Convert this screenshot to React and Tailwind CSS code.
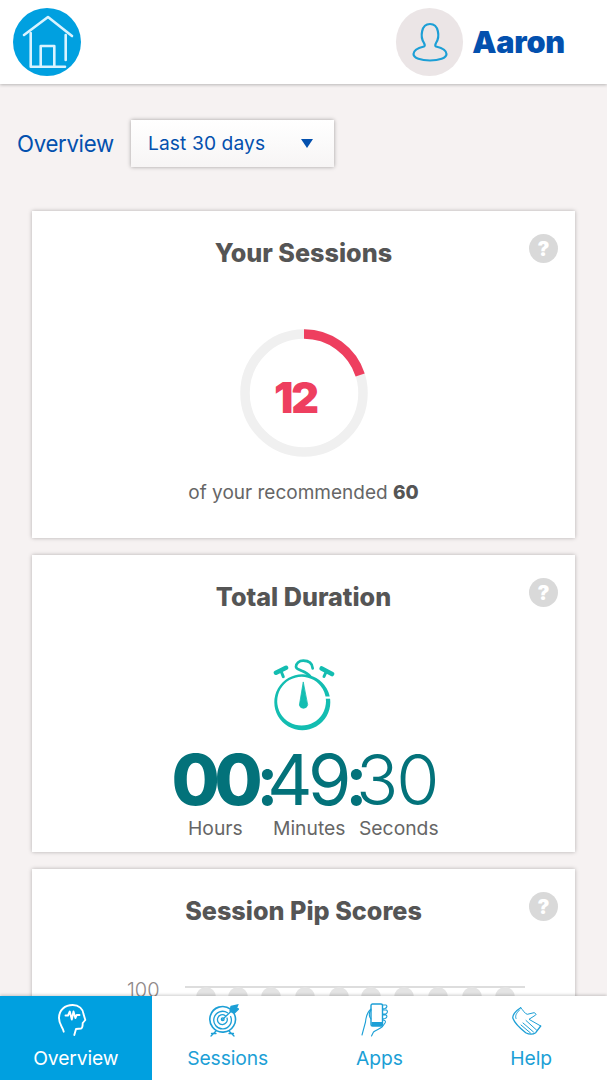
import React from "react";

const sans = "font-['Inter','Liberation_Sans',sans-serif]";

function HomeLogo() {
  return (
    <svg width="68" height="68" viewBox="0 0 68 68" fill="none">
      <circle cx="34" cy="34" r="34" fill="#00a0e0" />
      <g stroke="#d9f3ff" strokeWidth="2.6" strokeLinecap="round" strokeLinejoin="round">
        <path d="M11 27 L35 9 L59 28" />
        <path d="M17.7 25 V58.7 H52" />
        <path d="M52.7 27 V52" />
        <path d="M27.7 58.7 V38 H41.3 V58.7" />
      </g>
    </svg>
  );
}

function UserIcon() {
  return (
    <svg width="36" height="40" viewBox="0 0 36 40" fill="none" stroke="#1c9fd6" strokeWidth="2.2">
      <path d="M12 21 C8 15 9 2 18 2 C27 2 28 15 24 21 C23 23 23 24 24 24.5 C30 26 34.5 29 34.5 32 C34.5 36 27 38.5 18 38.5 C9 38.5 1.5 36 1.5 32 C1.5 29 6 26 12 24.5 C13 24 13 23 12 21 Z" />
    </svg>
  );
}

function HelpBadge() {
  return (
    <div className="absolute right-[17px] top-[23px] flex h-[29px] w-[29px] items-center justify-center rounded-full bg-[#d9d9d9] text-[20px] font-black leading-none text-white">
      ?
    </div>
  );
}

function Ring() {
  const r = 59;
  const c = 2 * Math.PI * r;
  return (
    <svg width="128" height="128" viewBox="0 0 128 128" className="absolute inset-0" fill="none">
      <circle cx="64" cy="64" r={r} stroke="#f0f0f0" strokeWidth="9.5" />
      <circle
        cx="64"
        cy="64"
        r={r}
        stroke="#ee3f5f"
        strokeWidth="9.5"
        strokeDasharray={`${c * 0.2} ${c}`}
        transform="rotate(-90 64 64)"
      />
    </svg>
  );
}

function Stopwatch() {
  return (
    <svg width="62" height="74" viewBox="0 0 62 74" fill="none" stroke="#13bdb1" strokeLinecap="round">
      {/* crescent body: inner circle sits up-left so the stroke thickens toward the bottom */}
      <path
        fillRule="evenodd"
        fill="#13bdb1"
        stroke="none"
        d="M29.3 15.3 a28 28 0 1 0 0.01 0 Z M28.6 17.8 a24.4 24.4 0 1 1 -0.01 0 Z"
      />
      <rect x="50" y="37.5" width="10" height="2.2" fill="#fff" stroke="none" />
      <path d="M39.7 9.3 C39 3 34 1.7 30.3 1.7 C26 1.7 23 4.5 23 7.7 C23 10 26 10.5 28.7 11.7 C32 13 35 14.5 37 17" strokeWidth="2.7" />
      <path d="M30.2 23.3 L26.4 46 A4.2 4.2 0 0 0 34.6 46 Z" fill="#13bdb1" stroke="#13bdb1" strokeWidth="0.8" strokeLinejoin="round" />
      <path d="M3 13.7 L13 8.8" strokeWidth="4.6" />
      <path d="M8 12 L10.3 17.7" strokeWidth="3" />
      <path d="M48.7 9.5 L59 15" strokeWidth="4.6" />
      <path d="M53.5 12 L51 17.5" strokeWidth="3" />
    </svg>
  );
}

function BrainIcon() {
  return (
    <svg width="30" height="32" viewBox="0 0 30 32" fill="none" stroke="#fff" strokeWidth="1.9" strokeLinecap="round" strokeLinejoin="round">
      <path d="M5.7 27.7 C5 23 1 21 1 14 C1 6 7 1 14.7 1 C21 1 25 5 25.5 10 L27.3 16 L24.7 19 C24.7 22 24.5 24 23 24.5 L18 25 L16.3 31" />
      <path d="M7.5 11.5 H10 L11.8 7.5 L13.8 15.5 L15.5 7.5 L17.4 14 L18.7 11 H21.5" />
    </svg>
  );
}

function TargetIcon() {
  return (
    <svg width="31" height="33" viewBox="0 0 31 33" fill="none" stroke="#1c9fd6" strokeWidth="1.3" strokeLinecap="round">
      <path d="M22.5 5.2 A12.8 12.8 0 1 0 26.3 10" strokeWidth="1.6" />
      <path d="M19.5 8.8 A8.8 8.8 0 1 0 22.6 12.5" />
      <path d="M17.3 11.7 A4.9 4.9 0 1 0 19 14" />
      <circle cx="14.7" cy="15.3" r="1.4" />
      <path d="M14.7 15.3 L25 5.5" />
      <path d="M23 2.5 L29.7 1 L28.5 4 L30.5 5 L26 9.5 L22 7 Z" fill="#1c9fd6" />
      <path d="M8 27 L3 32 M21 27 L26 32 M3.5 29.5 H8 M21 29.5 H25.5" />
    </svg>
  );
}

function PhoneIcon() {
  return (
    <svg width="28" height="34" viewBox="0 0 28 34" fill="none" stroke="#1c9fd6" strokeWidth="1.1" strokeLinecap="round" strokeLinejoin="round">
      <rect x="10" y="1" width="11.5" height="22" rx="1.5" strokeWidth="1.4" />
      <rect x="10.5" y="19" width="10.5" height="4" fill="#1c9fd6" stroke="none" />
      <path d="M10 6 C6 9 5 14 4.5 19 L1 32" />
      <path d="M10 7 C8 9 7.5 13 10 16" />
      <path d="M21.5 2 H25 C26.5 2.5 26 5 24 5.5 L21.5 6 M21.5 7 H25.5 C27 8 26.5 10.5 24.5 11 L21.5 11 M21.5 12 H25 C26.5 13 26 15 24 15.5 L21.5 16 M21.5 17 C24 17 25 18 24 20 L21.5 23.5 C19 26 15 27 12.5 29 L10.5 33" />
    </svg>
  );
}

function HandIcon() {
  return (
    <svg width="30" height="29" viewBox="0 0 30 29" fill="none" stroke="#1c9fd6" strokeWidth="1" strokeLinecap="round" strokeLinejoin="round">
      <path d="M8.7 1.7 C3 5 0 10 1 12.5 C3 18 9 23 13.7 26.7 C17 28.5 21 28.5 23.7 26.7 L28.7 20" strokeWidth="1.3" />
      <path d="M7.5 4 C4 7.5 3 10 4 12.5 M8.7 1.7 C11 4 13 8 15.3 8.3 L22 6.7 C23.5 7 24.5 8.5 23.7 9 L17 13.3 L28.7 20" />
      <path d="M24.5 24 L14 14.5 M21.5 26 L11 17 M18.5 27 L9 19" />
    </svg>
  );
}

function Tab({ icon, label, active, iconClass }) {
  return (
    <div className={`relative flex h-full flex-col items-center pt-[7px] ${active ? "bg-[#00a0e0] text-white" : "bg-white text-[#1c9fd6]"}`}>
      <div className={`flex h-[34px] items-center justify-center ${iconClass}`}>{icon}</div>
      <div className="absolute top-[50px] text-[19.3px] leading-[24px] tracking-[-0.1px]">{label}</div>
    </div>
  );
}

function Card({ title, height, children }) {
  return (
    <section className="relative w-full overflow-hidden bg-white shadow-[0_0_4px_rgba(0,0,0,0.28)]" style={{ height }}>
      <HelpBadge />
      <h2 className="pt-[26px] text-center text-[25.2px] font-extrabold leading-[32px] text-[#555555]">{title}</h2>
      {children}
    </section>
  );
}

export default function App() {
  const dots = [206, 238, 271, 305, 339, 371, 404, 438, 472, 505];
  return (
    <div className={`relative h-[1080px] w-[607px] overflow-hidden bg-[#f6f2f2] ${sans}`}>
      <header className="flex h-[84px] items-center justify-between bg-white pl-[13px] pr-[42px] shadow-[0_1px_3px_rgba(0,0,0,0.25)]">
        <HomeLogo />
        <div className="flex items-center gap-[9px]">
          <div className="flex h-[68px] w-[67px] items-center justify-center rounded-full bg-[#ebe5e6] pl-[1px]">
            <UserIcon />
          </div>
          <span className="pt-[1px] text-[30.6px] font-black leading-none tracking-[-0.2px] text-[#0350ae]">Aaron</span>
        </div>
      </header>

      <div className="flex items-center pl-[17px] pt-[36px]">
        <span className="w-[114px] text-[22.2px] leading-[47px] tracking-[-0.3px] text-[#0350ae]">Overview</span>
        <div className="flex h-[47px] w-[203px] items-center justify-between bg-gradient-to-b from-white to-[#f7f5f5] pl-[17px] pr-[21px] shadow-[0_0_4px_rgba(0,0,0,0.35)]">
          <span className="text-[19.2px] tracking-[0.1px] text-[#0350ae]">Last 30 days</span>
          <span className="h-0 w-0 border-x-[6.5px] border-t-[9px] border-x-transparent border-t-[#0350ae]" />
        </div>
      </div>

      <main className="flex flex-col gap-[17px] pl-[32px] pr-[32px] pt-[44px]">
        <Card title="Your Sessions" height={327}>
          <div className="relative mx-auto mt-[60px] h-[128px] w-[128px]">
            <Ring />
            <div className="absolute inset-0 flex items-center justify-center pt-[9px] pr-[16px] text-[43px] font-black leading-none tracking-[-2px] text-[#ee3f5f]">
              12
            </div>
          </div>
          <p className="mt-[22px] text-center text-[19px] leading-[28px] text-[#666666]">
            of your recommended <b className="font-extrabold text-[#555555]">60</b>
          </p>
        </Card>

        <Card title="Total Duration" height={297}>
          <div className="ml-[241px] mt-[46px] flex h-[74px] w-[62px]">
            <Stopwatch />
          </div>
          <div className="mb-[7px] mt-[18px] flex justify-center pl-[2px] text-[70px] leading-[58px] text-[#03727a]">
            <span className="font-extrabold tracking-[-5.5px]">00</span>
            <span className="flex w-[10px] translate-x-[5px] justify-center font-semibold">:</span>
            <span className="font-normal tracking-[-4.5px]">49</span>
            <span className="flex w-[9px] translate-x-[5px] justify-center font-semibold">:</span>
            <span className="font-light tracking-[-2px]">30</span>
          </div>
          <div className="flex pl-[156px] text-[19.3px] leading-[24px] text-[#666666]">
            <span className="w-[85px]">Hours</span>
            <span className="w-[86px]">Minutes</span>
            <span>Seconds</span>
          </div>
        </Card>

        <Card title="Session Pip Scores" height={300}>
          <div className="relative">
            <span className="absolute left-[95px] top-[51px] text-[20px] font-light leading-[24px] text-[#8f8888]">100</span>
            <div className="absolute left-[153px] top-[59px] h-[2px] w-[340px] bg-[#dddddd]" />
            {dots.map((x) => (
              <span
                key={x}
                className="absolute top-[60px] h-[20px] w-[20px] rounded-full bg-[#e4e4e4]"
                style={{ left: x - 32 - 10 }}
              />
            ))}
          </div>
        </Card>
      </main>

      <nav className="absolute inset-x-0 bottom-0 grid h-[84px] grid-cols-4 bg-white shadow-[0_-1px_3px_rgba(0,0,0,0.2)]">
        <Tab active icon={<BrainIcon />} label="Overview" iconClass="mr-[6px]" />
        <Tab icon={<TargetIcon />} label="Sessions" iconClass="mr-[9px]" />
        <Tab icon={<PhoneIcon />} label="Apps" iconClass="mr-[8px]" />
        <Tab icon={<HandIcon />} label="Help" iconClass="mr-[9px]" />
      </nav>
    </div>
  );
}
